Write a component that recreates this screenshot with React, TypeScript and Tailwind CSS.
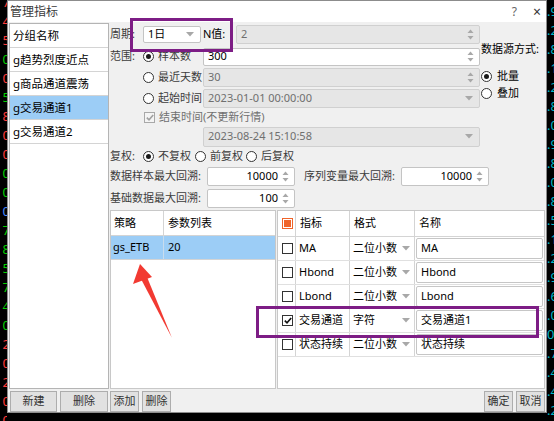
import React from "react";

const F = "font-['Noto_Sans','Noto_Sans_CJK_SC',sans-serif]";

function SpinArrows() {
  return (
    <svg width="7" height="11" viewBox="0 0 7 11">
      <path d="M3.5 0.5 L6.5 4 L0.5 4 Z" fill="#a8a8a8" />
      <path d="M3.5 10.5 L6.5 7 L0.5 7 Z" fill="#a8a8a8" />
    </svg>
  );
}

function DownArrow() {
  return (
    <svg width="8" height="5" viewBox="0 0 8 5">
      <path d="M0 0 H8 L4 4.5 Z" fill="#a8a8a8" />
    </svg>
  );
}

function Field({
  className,
  value,
  disabled,
  arrow,
  right,
}: {
  className: string;
  value: string;
  disabled?: boolean;
  arrow?: "spin" | "down";
  right?: boolean;
}) {
  return (
    <div
      className={`flex items-center border rounded-[2px] ${
        disabled ? "bg-[#e6e6e6] border-[#d0d0d0] text-[#6f6f6f]" : "bg-white border-[#c4c4c4] text-black"
      } ${className}`}
    >
      <span className={`flex-1 px-[4px] whitespace-nowrap ${right ? "text-right" : ""}`}>{value}</span>
      {arrow === "spin" && (
        <span className="pr-[5px] flex">
          <SpinArrows />
        </span>
      )}
      {arrow === "down" && (
        <span className="pr-[6px] flex">
          <DownArrow />
        </span>
      )}
    </div>
  );
}

function Radio({ checked }: { checked?: boolean }) {
  return (
    <span className="w-[11px] h-[11px] rounded-full border border-[#333] bg-white flex items-center justify-center shrink-0">
      {checked && <span className="w-[5px] h-[5px] rounded-full bg-[#1a1a1a]" />}
    </span>
  );
}

function Check({ checked, disabled }: { checked?: boolean; disabled?: boolean }) {
  return (
    <span
      className={`w-[11px] h-[11px] border flex items-center justify-center shrink-0 ${
        disabled ? "border-[#a8a8a8] bg-[#f4f4f4]" : "border-[#333] bg-white"
      }`}
    >
      {checked && (
        <svg width="8" height="7" viewBox="0 0 8 7">
          <path d="M0.8 3.6 L3 5.8 L7.2 1" fill="none" stroke={disabled ? "#a0a0a0" : "#111"} strokeWidth="1.6" />
        </svg>
      )}
    </span>
  );
}

function Btn({ label, className }: { label: string; className: string }) {
  return (
    <div
      className={`h-[21px] flex items-center justify-center bg-[#e1e1e1] border border-[#adadad] text-[#333] ${className}`}
    >
      {label}
    </div>
  );
}

const leftDigits: [string, string][] = [
  ["7", "#ff3b3b"],
  ["4", "#ff3b3b"],
  ["5", "#ff3b3b"],
  ["0", "#00d000"],
  ["0", "#ff3b3b"],
  ["5", "#00d000"],
  ["8", "#ff3b3b"],
  ["0", "#ff3b3b"],
  ["0", "#ff3b3b"],
  ["0", "#00d000"],
  ["0", "#00d000"],
  ["0", "#4a8cff"],
  ["7", "#00d000"],
  ["8", "#00d000"],
  ["5", "#00d000"],
  ["7", "#00d000"],
  ["4", "#00d000"],
  ["0", "#00d000"],
  ["2", "#ff3b3b"],
  ["0", "#ff3b3b"],
  ["2", "#ff3b3b"],
  ["0", "#ff3b3b"],
  ["0", "#ff3b3b"],
];

const rightDigits = [".9", ".2", ".8", ".1", ".2", ".8", ".0", ".9", ".8", ".0", ".8", ".5", ".1", ".2", ".9", ".6", ".0", "09", ".7", ".4", ".4", ".2"];

const rows = [
  { on: false, name: "MA", fmt: "二位小数", title: "MA" },
  { on: false, name: "Hbond", fmt: "二位小数", title: "Hbond" },
  { on: false, name: "Lbond", fmt: "二位小数", title: "Lbond" },
  { on: true, name: "交易通道", fmt: "字符", title: "交易通道1" },
  { on: false, name: "状态持续", fmt: "二位小数", title: "状态持续" },
];

export default function App() {
  return (
    <div className={`relative w-[554px] h-[421px] bg-black overflow-hidden flex text-[11px] ${F}`}>
      {/* left background strip */}
      <div className="w-[7px] h-full overflow-hidden shrink-0">
        <div className="-mt-[7px] flex flex-col">
          {leftDigits.map(([d, c], i) => (
            <div key={i} className="w-[10px] h-[19px] leading-[19px] text-right text-[13px]" style={{ color: c }}>
              {d}
            </div>
          ))}
        </div>
      </div>

      {/* dialog */}
      <div className="w-[540px] h-[413px] border border-[#8c8c8c] bg-[#f0f0f0] flex flex-col shrink-0">
        {/* title */}
        <div className="h-[21px] bg-white flex items-center pl-[2px] text-[#3a3a3a] text-[12px]">
          <span>管理指标</span>
          <span className="ml-auto text-[#666] text-[12px] mr-[16px]">?</span>
          <span className="text-[#333] text-[14px] mr-[5px] leading-none">×</span>
        </div>

        {/* body */}
        <div className="flex flex-col pl-[1px] pt-[1px] flex-1">
          <div className="h-[366px] flex">
            {/* group list */}
            <div className="w-[100px] h-full bg-white border border-[#b4b4b4] flex flex-col shrink-0">
              {["分组名称", "g趋势烈度近点", "g商品通道震荡", "g交易通道1", "g交易通道2"].map((t, i) => (
                <div
                  key={t}
                  className={`h-[24px] flex items-center pl-[3px] border-b border-[#d4d4d4] text-black text-[11.5px] ${
                    i === 3 ? "bg-[#9ccdf6]" : ""
                  }`}
                >
                  {t}
                </div>
              ))}
            </div>

            {/* right panel */}
            <div className="w-[435px] ml-[1px] flex flex-col">
              <div className="h-[187px] flex flex-col text-[#3c3c3c]">
                <div className="h-[124px] flex">
                  <div className="w-[371px] flex flex-col">
                    {/* R1 */}
                    <div className="h-[23px] flex items-center">
                      <span className="w-[33px]">周期:</span>
                      <Field className="w-[58px] h-[17px]" value="1日" arrow="down" />
                      <span className="w-[33px] ml-[2px] text-black">N值:</span>
                      <Field className="w-[244px] h-[19px]" value="2" disabled arrow="spin" />
                    </div>
                    {/* R2 */}
                    <div className="h-[21px] flex items-center">
                      <span className="w-[33px]">范围:</span>
                      <div className="w-[60px] flex items-center gap-[4px]">
                        <Radio checked />
                        <span>样本数</span>
                      </div>
                      <Field className="w-[277px] h-[18px]" value="300" arrow="spin" />
                    </div>
                    {/* R3 */}
                    <div className="h-[21px] flex items-center pl-[33px]">
                      <div className="w-[60px] flex items-center gap-[4px]">
                        <Radio />
                        <span>最近天数</span>
                      </div>
                      <Field className="w-[277px] h-[19px]" value="30" disabled arrow="spin" />
                    </div>
                    {/* R4 */}
                    <div className="h-[20px] flex items-center pl-[33px]">
                      <div className="w-[60px] flex items-center gap-[4px]">
                        <Radio />
                        <span>起始时间</span>
                      </div>
                      <Field className="w-[277px] h-[19px]" value="2023-01-01 00:00:00" disabled arrow="down" />
                    </div>
                    {/* R5 */}
                    <div className="h-[18px] flex items-center pl-[34px] gap-[4px] text-[#707070]">
                      <Check checked disabled />
                      <span>结束时间(不更新行情)</span>
                    </div>
                    {/* R6 */}
                    <div className="h-[21px] flex items-center pl-[93px]">
                      <Field className="w-[277px] h-[20px]" value="2023-08-24 15:10:58" disabled arrow="down" />
                    </div>
                  </div>
                  {/* data source */}
                  <div className="w-[64px] flex flex-col text-black">
                    <div className="pt-[18px] h-[34px] leading-[16px]">数据源方式:</div>
                    <div className="mt-[11px] h-[16px] flex items-center gap-[5px]">
                      <Radio checked />
                      <span>批量</span>
                    </div>
                    <div className="mt-[1px] h-[16px] flex items-center gap-[5px]">
                      <Radio />
                      <span>叠加</span>
                    </div>
                  </div>
                </div>
                {/* R7 */}
                <div className="h-[19px] flex items-center">
                  <span className="w-[33px]">复权:</span>
                  <Radio checked />
                  <span className="ml-[4px]">不复权</span>
                  <span className="ml-[4px]">
                    <Radio />
                  </span>
                  <span className="ml-[4px]">前复权</span>
                  <span className="ml-[3px]">
                    <Radio />
                  </span>
                  <span className="ml-[4px]">后复权</span>
                </div>
                {/* R8 */}
                <div className="h-[21px] flex items-center">
                  <span className="w-[97px] whitespace-nowrap">数据样本最大回溯:</span>
                  <Field className="w-[88px] h-[19px]" value="10000" right arrow="spin" />
                  <span className="w-[97px] ml-[9px] whitespace-nowrap">序列变量最大回溯:</span>
                  <Field className="w-[88px] h-[19px]" value="10000" right arrow="spin" />
                </div>
                {/* R9 */}
                <div className="h-[23px] flex items-center">
                  <span className="w-[97px] whitespace-nowrap">基础数据最大回溯:</span>
                  <Field className="w-[88px] h-[19px]" value="100" right arrow="spin" />
                </div>
              </div>

              {/* tables */}
              <div className="h-[179px] flex">
                <div className="w-[166px] h-full bg-white border border-[#c8c8c8] flex flex-col text-black">
                  <div className="h-[25px] flex border-b border-[#d4d4d4]">
                    <div className="w-[53px] border-r border-[#d4d4d4] flex items-center pl-[3px]">策略</div>
                    <div className="flex-1 flex items-center pl-[4px]">参数列表</div>
                  </div>
                  <div className="h-[24px] flex bg-[#9ccdf6] border-b border-[#d4d4d4]">
                    <div className="w-[53px] border-r border-[#c8dcee] flex items-center pl-[2px]">gs_ETB</div>
                    <div className="flex-1 flex items-center pl-[4px]">20</div>
                  </div>
                </div>

                <div className="w-[268px] ml-[1px] h-full bg-white border border-[#c8c8c8] flex flex-col text-black">
                  <div className="h-[26px] flex border-b border-[#d4d4d4]">
                    <div className="w-[18px] border-r border-[#d4d4d4] flex items-center pl-[4px]">
                      <span className="w-[11px] h-[11px] border border-[#f0642a] flex items-center justify-center">
                        <span className="w-[7px] h-[7px] bg-[#f0642a]" />
                      </span>
                    </div>
                    <div className="w-[54px] border-r border-[#d4d4d4] flex items-center pl-[4px]">指标</div>
                    <div className="w-[65px] border-r border-[#d4d4d4] flex items-center pl-[4px]">格式</div>
                    <div className="flex-1 flex items-center pl-[4px]">名称</div>
                  </div>
                  {rows.map((r) => (
                    <div key={r.name} className="h-[24px] flex border-b border-[#e0e0e0]">
                      <div className="w-[18px] border-r border-[#d4d4d4] flex items-center pl-[4px]">
                        <Check checked={r.on} />
                      </div>
                      <div className="w-[54px] border-r border-[#d4d4d4] flex items-center pl-[3px] whitespace-nowrap">
                        {r.name}
                      </div>
                      <div className="w-[65px] border-r border-[#d4d4d4] flex items-center pl-[3px] pr-[4px]">
                        <span className="flex-1 whitespace-nowrap">{r.fmt}</span>
                        <DownArrow />
                      </div>
                      <div className="flex-1 flex items-center px-[1px] py-[1px]">
                        <div className="w-full h-full border border-[#c6c6c6] rounded-[2px] flex items-center pl-[4px] bg-white">
                          {r.title}
                        </div>
                      </div>
                    </div>
                  ))}
                </div>
              </div>
            </div>
          </div>

          {/* buttons */}
          <div className="mt-[2px] flex items-center">
            <Btn label="新建" className="ml-[1px] w-[47px]" />
            <Btn label="删除" className="ml-[3px] w-[48px]" />
            <Btn label="添加" className="ml-[2px] w-[29px]" />
            <Btn label="删除" className="ml-[3px] w-[29px]" />
            <Btn label="确定" className="ml-auto w-[29px]" />
            <Btn label="取消" className="ml-[3px] w-[29px] mr-[1px]" />
          </div>
        </div>
      </div>

      {/* right background strip */}
      <div className="w-[7px] h-full overflow-hidden shrink-0">
        <div className="mt-[2px] flex flex-col">
          {rightDigits.map((d, i) => (
            <div key={i} className="h-[19px] leading-[19px] text-[13px] text-[#00b8c8] whitespace-nowrap">
              {d}
            </div>
          ))}
        </div>
      </div>

      {/* annotations */}
      <div className="absolute left-[130px] top-[18px] w-[103px] h-[34px] border-[3px] border-[#7d1d85]" />
      <div className="absolute left-[256px] top-[306px] w-[283px] h-[32px] border-[3px] border-[#7d1d85]" />
      <svg className="absolute left-0 top-0" width="554" height="421" viewBox="0 0 554 421">
        <polygon points="140,264 133,284 152,277" fill="#f23a32" />
        <polygon points="141,279 147,277 172,338" fill="#f23a32" />
      </svg>
    </div>
  );
}
